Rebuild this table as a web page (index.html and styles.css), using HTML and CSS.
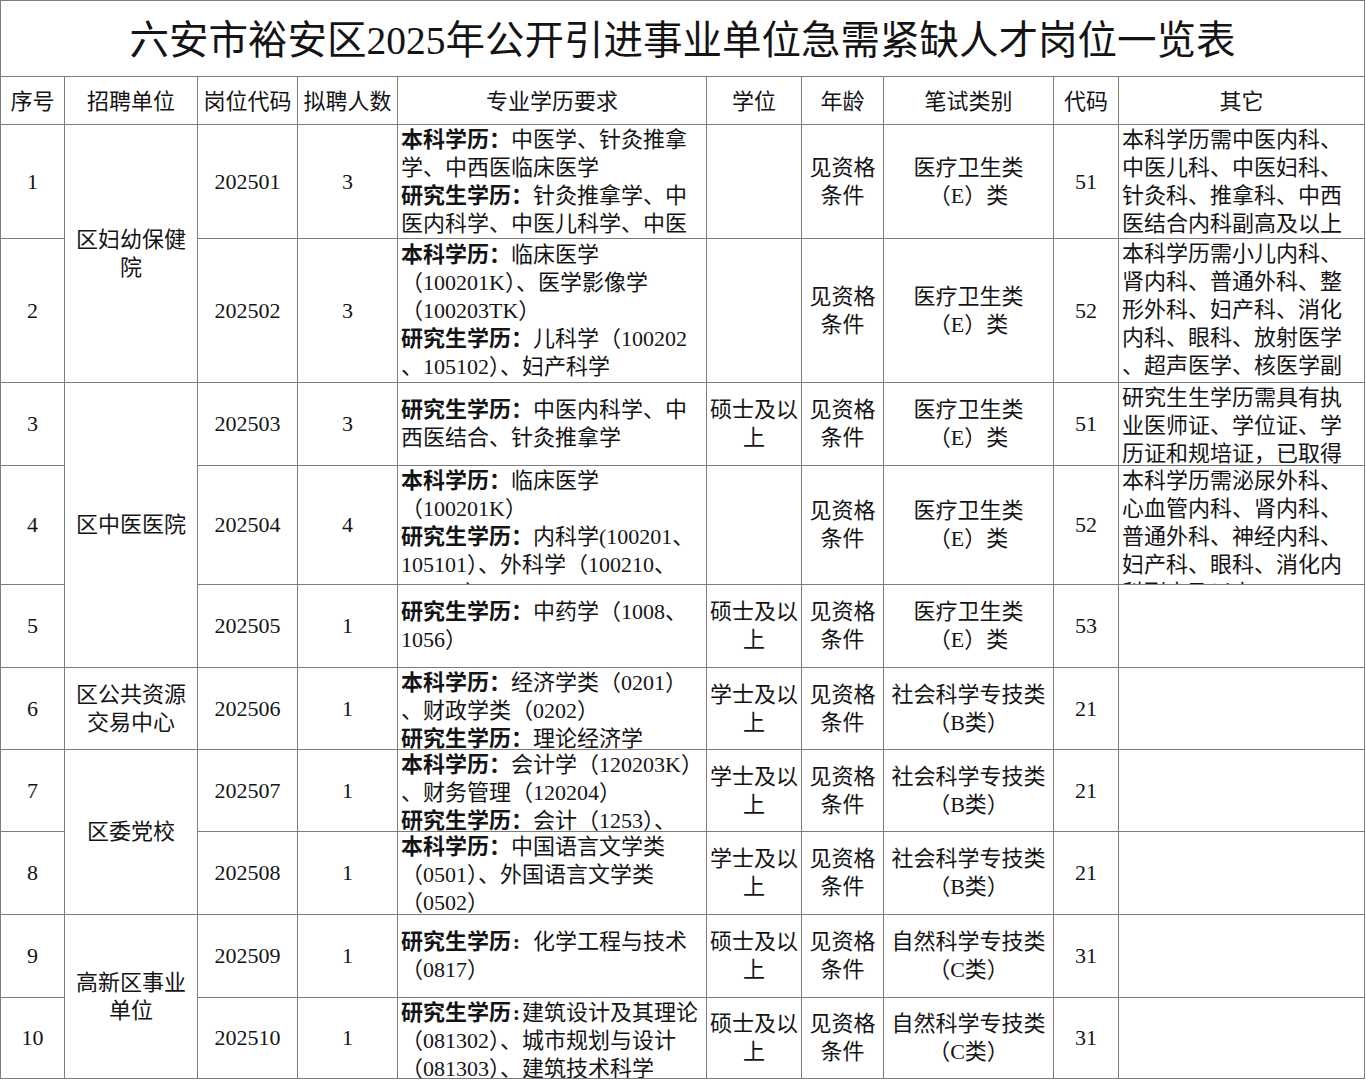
FILE: index.html
```html
<!DOCTYPE html>
<html lang="zh-CN">
<head>
<meta charset="utf-8">
<title>六安市裕安区2025年公开引进事业单位急需紧缺人才岗位一览表</title>
<link rel="stylesheet" href="styles.css">
</head>
<body>
<div class="sheet">
  <div class="c title"><p>六安市裕安区2025年公开引进事业单位急需紧缺人才岗位一览表</p></div>

  <div class="c th"><p>序号</p></div>
  <div class="c th"><p>招聘单位</p></div>
  <div class="c th"><p>岗位代码</p></div>
  <div class="c th"><p>拟聘人数</p></div>
  <div class="c th"><p>专业学历要求</p></div>
  <div class="c th"><p>学位</p></div>
  <div class="c th"><p>年龄</p></div>
  <div class="c th"><p>笔试类别</p></div>
  <div class="c th"><p>代码</p></div>
  <div class="c th"><p>其它</p></div>

  <!-- 1 -->
  <div class="c ctr"><p>1</p></div>
  <div class="c ctr span2"><p>区妇幼保健<br>院</p></div>
  <div class="c ctr"><p>202501</p></div>
  <div class="c ctr"><p>3</p></div>
  <div class="c txt top"><p><b>本科学历：</b>中医学、针灸推拿<br>学、中西医临床医学<br><b>研究生学历：</b>针灸推拿学、中<br>医内科学、中医儿科学、中医</p></div>
  <div class="c ctr"><p></p></div>
  <div class="c ctr"><p>见资格<br>条件</p></div>
  <div class="c ctr"><p>医疗卫生类<br>（E）类</p></div>
  <div class="c ctr"><p>51</p></div>
  <div class="c txt top"><p>本科学历需中医内科、<br>中医儿科、中医妇科、<br>针灸科、推拿科、中西<br>医结合内科副高及以上</p></div>

  <!-- 2 -->
  <div class="c ctr"><p>2</p></div>
  <div class="c ctr"><p>202502</p></div>
  <div class="c ctr"><p>3</p></div>
  <div class="c txt"><p><b>本科学历：</b>临床医学<br>（100201K）、医学影像学<br>（100203TK）<br><b>研究生学历：</b>儿科学（100202<br>、105102）、妇产科学</p></div>
  <div class="c ctr"><p></p></div>
  <div class="c ctr"><p>见资格<br>条件</p></div>
  <div class="c ctr"><p>医疗卫生类<br>（E）类</p></div>
  <div class="c ctr"><p>52</p></div>
  <div class="c txt top"><p>本科学历需小儿内科、<br>肾内科、普通外科、整<br>形外科、妇产科、消化<br>内科、眼科、放射医学<br>、超声医学、核医学副</p></div>

  <!-- 3 -->
  <div class="c ctr"><p>3</p></div>
  <div class="c ctr span3"><p>区中医医院</p></div>
  <div class="c ctr"><p>202503</p></div>
  <div class="c ctr"><p>3</p></div>
  <div class="c txt"><p><b>研究生学历：</b>中医内科学、中<br>西医结合、针灸推拿学</p></div>
  <div class="c ctr"><p>硕士及以<br>上</p></div>
  <div class="c ctr"><p>见资格<br>条件</p></div>
  <div class="c ctr"><p>医疗卫生类<br>（E）类</p></div>
  <div class="c ctr"><p>51</p></div>
  <div class="c txt top"><p>研究生生学历需具有执<br>业医师证、学位证、学<br>历证和规培证，已取得</p></div>

  <!-- 4 -->
  <div class="c ctr"><p>4</p></div>
  <div class="c ctr"><p>202504</p></div>
  <div class="c ctr"><p>4</p></div>
  <div class="c txt top"><p><b>本科学历：</b>临床医学<br>（100201K）<br><b>研究生学历：</b>内科学(100201、<br>105101）、外科学（100210、<br>105111）</p></div>
  <div class="c ctr"><p></p></div>
  <div class="c ctr"><p>见资格<br>条件</p></div>
  <div class="c ctr"><p>医疗卫生类<br>（E）类</p></div>
  <div class="c ctr"><p>52</p></div>
  <div class="c txt top"><p>本科学历需泌尿外科、<br>心血管内科、肾内科、<br>普通外科、神经内科、<br>妇产科、眼科、消化内<br>科副高及以上</p></div>

  <!-- 5 -->
  <div class="c ctr"><p>5</p></div>
  <div class="c ctr"><p>202505</p></div>
  <div class="c ctr"><p>1</p></div>
  <div class="c txt"><p><b>研究生学历：</b>中药学（1008、<br>1056）</p></div>
  <div class="c ctr"><p>硕士及以<br>上</p></div>
  <div class="c ctr"><p>见资格<br>条件</p></div>
  <div class="c ctr"><p>医疗卫生类<br>（E）类</p></div>
  <div class="c ctr"><p>53</p></div>
  <div class="c txt"><p></p></div>

  <!-- 6 -->
  <div class="c ctr"><p>6</p></div>
  <div class="c ctr"><p>区公共资源<br>交易中心</p></div>
  <div class="c ctr"><p>202506</p></div>
  <div class="c ctr"><p>1</p></div>
  <div class="c txt top"><p><b>本科学历：</b>经济学类（0201）<br>、财政学类（0202）<br><b>研究生学历：</b>理论经济学</p></div>
  <div class="c ctr"><p>学士及以<br>上</p></div>
  <div class="c ctr"><p>见资格<br>条件</p></div>
  <div class="c ctr"><p>社会科学专技类<br>（B类）</p></div>
  <div class="c ctr"><p>21</p></div>
  <div class="c txt"><p></p></div>

  <!-- 7 -->
  <div class="c ctr"><p>7</p></div>
  <div class="c ctr span2"><p>区委党校</p></div>
  <div class="c ctr"><p>202507</p></div>
  <div class="c ctr"><p>1</p></div>
  <div class="c txt top"><p><b>本科学历：</b>会计学（120203K）<br>、财务管理（120204）<br><b>研究生学历：</b>会计（1253）、</p></div>
  <div class="c ctr"><p>学士及以<br>上</p></div>
  <div class="c ctr"><p>见资格<br>条件</p></div>
  <div class="c ctr"><p>社会科学专技类<br>（B类）</p></div>
  <div class="c ctr"><p>21</p></div>
  <div class="c txt"><p></p></div>

  <!-- 8 -->
  <div class="c ctr"><p>8</p></div>
  <div class="c ctr"><p>202508</p></div>
  <div class="c ctr"><p>1</p></div>
  <div class="c txt top"><p><b>本科学历：</b>中国语言文学类<br>（0501）、外国语言文学类<br>（0502）</p></div>
  <div class="c ctr"><p>学士及以<br>上</p></div>
  <div class="c ctr"><p>见资格<br>条件</p></div>
  <div class="c ctr"><p>社会科学专技类<br>（B类）</p></div>
  <div class="c ctr"><p>21</p></div>
  <div class="c txt"><p></p></div>

  <!-- 9 -->
  <div class="c ctr"><p>9</p></div>
  <div class="c ctr span2"><p>高新区事业<br>单位</p></div>
  <div class="c ctr"><p>202509</p></div>
  <div class="c ctr"><p>1</p></div>
  <div class="c txt"><p><b>研究生学历<span class="hc">:</span></b><span class="sp"></span>化学工程与技术<br>（0817）</p></div>
  <div class="c ctr"><p>硕士及以<br>上</p></div>
  <div class="c ctr"><p>见资格<br>条件</p></div>
  <div class="c ctr"><p>自然科学专技类<br>（C类）</p></div>
  <div class="c ctr"><p>31</p></div>
  <div class="c txt"><p></p></div>

  <!-- 10 -->
  <div class="c ctr"><p>10</p></div>
  <div class="c ctr"><p>202510</p></div>
  <div class="c ctr"><p>1</p></div>
  <div class="c txt top"><p><b>研究生学历<span class="hc">:</span></b>建筑设计及其理论<br>（081302）、城市规划与设计<br>（081303）、建筑技术科学</p></div>
  <div class="c ctr"><p>硕士及以<br>上</p></div>
  <div class="c ctr"><p>见资格<br>条件</p></div>
  <div class="c ctr"><p>自然科学专技类<br>（C类）</p></div>
  <div class="c ctr"><p>31</p></div>
  <div class="c txt"><p></p></div>
</div>
</body>
</html>
```

FILE: styles.css
```css
html, body {
  margin: 0;
  padding: 0;
  background: #ffffff;
}

body {
  color: #141414;
  font-family: "Liberation Serif", "Noto Sans CJK SC", serif;
}

.sheet {
  display: grid;
  width: max-content;
  grid-template-columns: 64px 133px 100px 100px 309px 95px 82px 170px 65px 246px;
  grid-template-rows: 76px 48px 114px 144px 83px 119px 83px 82px 82px 83px 83px 81px;
  border-left: 1px solid #7c7c7c;
  border-top: 1px solid #7c7c7c;
}

.c {
  box-sizing: border-box;
  border-right: 1px solid #7c7c7c;
  border-bottom: 1px solid #7c7c7c;
  overflow: hidden;
  display: flex;
  flex-direction: column;
  justify-content: center;
  font-size: 22px;
  line-height: 28px;
}

.c > p {
  margin: 0;
  white-space: nowrap;
}

.c b {
  font-weight: 700;
}

/* half-width colon, padded to the 0.5em cell of the original font */
.hc {
  display: inline-block;
  width: 11px;
  text-align: center;
}

.sp {
  display: inline-block;
  width: 11px;
}

.ctr {
  text-align: center;
}

.txt {
  text-align: left;
  padding-left: 3px;
}

.top {
  justify-content: flex-start;
  padding-top: 1px;
}

.span2 {
  grid-row: span 2;
}

.span3 {
  grid-row: span 3;
}

.title {
  grid-column: 1 / -1;
  text-align: center;
  font-size: 39.5px;
  line-height: 46px;
  padding-top: 4px;
}

.th {
  text-align: center;
  font-family: "Noto Sans CJK SC", sans-serif;
  font-size: 22px;
  padding-bottom: 3px;
}
```
